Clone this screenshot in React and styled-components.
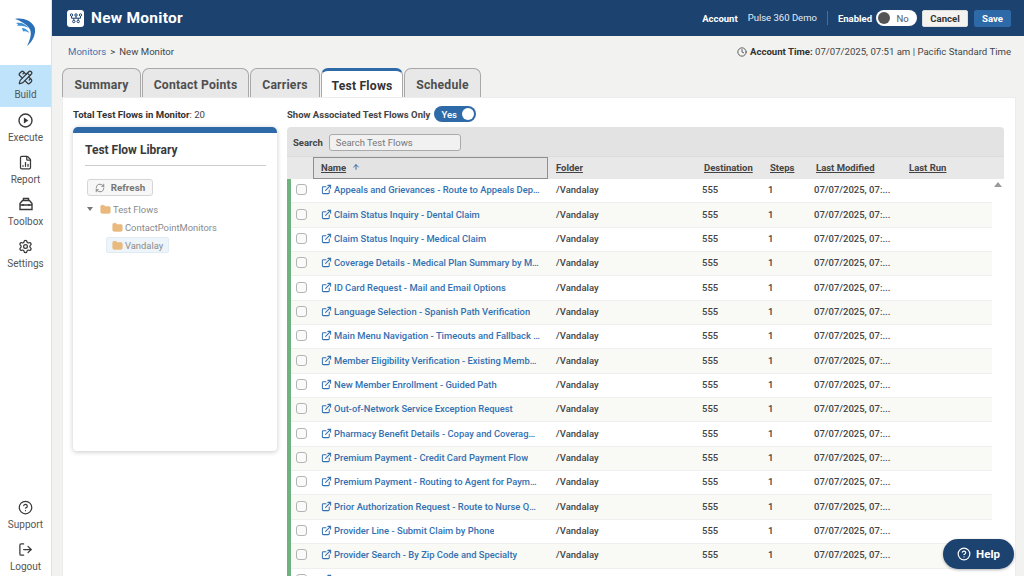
import React from 'react';
import styled, { createGlobalStyle } from 'styled-components';
import {
  PencilRuler,
  FileChartColumn,
  Settings,
  HelpCircle,
  LogOut,
  Clock,
  ExternalLink,
  RefreshCw,
  Folder,
  ArrowUp,
} from 'lucide-react';

const flows = [
  'Appeals and Grievances - Route to Appeals Department',
  'Claim Status Inquiry - Dental Claim',
  'Claim Status Inquiry - Medical Claim',
  'Coverage Details - Medical Plan Summary by Member',
  'ID Card Request - Mail and Email Options',
  'Language Selection - Spanish Path Verification',
  'Main Menu Navigation - Timeouts and Fallback Routing',
  'Member Eligibility Verification - Existing Member Path',
  'New Member Enrollment - Guided Path',
  'Out-of-Network Service Exception Request',
  'Pharmacy Benefit Details - Copay and Coverage Lookup',
  'Premium Payment - Credit Card Payment Flow',
  'Premium Payment - Routing to Agent for Payment Help',
  'Prior Authorization Request - Route to Nurse Queue',
  'Provider Line - Submit Claim by Phone',
  'Provider Search - By Zip Code and Specialty',
  'Referral Status - Specialist Lookup',
];

const tabs = [
  { name: 'Summary', w: 79 },
  { name: 'Contact Points', w: 107 },
  { name: 'Carriers', w: 70 },
  { name: 'Test Flows', w: 82 },
  { name: 'Schedule', w: 77 },
];

const GlobalStyle = createGlobalStyle`
  * { box-sizing: border-box; }
  html, body { margin: 0; height: 100%; overflow: hidden; }
  body { font-family: Roboto, "Liberation Sans", sans-serif; color: #333; }
`;

const Page = styled.div`
  display: flex;
  width: 1024px;
  height: 576px;
  overflow: hidden;
  position: relative;
  background: #f2f2f1;
`;

const Rail = styled.nav`
  width: 52px;
  flex: none;
  display: flex;
  flex-direction: column;
  background: #fff;
  border-right: 1px solid #e2e2e2;
`;

const Logo = styled.div`
  height: 65px;
  display: flex;
  justify-content: center;
  align-items: flex-start;
  padding-top: 18px;
`;

const RailItem = styled.a`
  height: 42.25px;
  display: flex;
  flex-direction: column;
  align-items: center;
  justify-content: flex-end;
  gap: 4px;
  padding-bottom: 6px;
  font-size: 10px;
  line-height: 12px;
  color: #555;
  background: ${(p) => (p.$active ? '#bfe3fb' : 'transparent')};
  svg { color: #3a3a3a; }
`;

const RailBottom = styled.div`
  margin-top: auto;
  margin-bottom: -3px;
`;

const Main = styled.div`
  flex: 1;
  min-width: 0;
  display: flex;
  flex-direction: column;
`;

const Header = styled.header`
  height: 36px;
  flex: none;
  display: flex;
  align-items: center;
  padding: 0 13px 0 15px;
  background: #1c4270;
  color: #fff;
`;

const HeaderBadge = styled.div`
  width: 17px;
  height: 17px;
  border-radius: 3px;
  background: #fff;
  color: #1c4270;
  display: flex;
  align-items: center;
  justify-content: center;
  margin-right: 7px;
`;

const Title = styled.h1`
  margin: 0;
  font-size: 15.5px;
  font-weight: 700;
  letter-spacing: 0.25px;
`;

const HeaderRight = styled.div`
  margin-left: auto;
  display: flex;
  align-items: center;
  font-size: 9.5px;
`;

const AccountLabel = styled.span`
  font-weight: 700;
  margin-right: 10px;
`;

const AccountName = styled.span`
  color: #e6ecf3;
  padding-right: 10px;
  border-right: 1px solid #4f6d92;
  line-height: 14px;
  margin-right: 10px;
`;

const EnabledLabel = styled.span`
  font-weight: 700;
  margin-right: 4px;
`;

const Toggle = styled.div`
  width: ${(p) => p.$w}px;
  height: 16px;
  border-radius: 8px;
  display: flex;
  align-items: center;
  padding: 0 2px;
  font-size: 9.5px;
  background: ${(p) => (p.$on ? '#2f6aa8' : '#fff')};
  color: ${(p) => (p.$on ? '#fff' : '#555')};
  font-weight: ${(p) => (p.$on ? 500 : 400)};
`;

const ToggleText = styled.span`
  flex: 1;
  text-align: center;
`;

const Knob = styled.i`
  width: 12px;
  height: 12px;
  border-radius: 50%;
  background: ${(p) => (p.$on ? '#fff' : '#555')};
`;

const Cancel = styled.button`
  height: 17px;
  width: 46px;
  margin-left: 5px;
  padding: 0;
  border: 1px solid #ddd;
  border-radius: 2px;
  background: #f4f3f0;
  color: #333;
  font: 700 9.6px Roboto, sans-serif;
`;

const Save = styled(Cancel)`
  background: #2f6aa8;
  border-color: #2f6aa8;
  color: #fff;
  width: 37px;
  margin-left: 6px;
`;

const Crumbs = styled.div`
  height: 32px;
  flex: none;
  display: flex;
  align-items: center;
  justify-content: space-between;
  padding: 0 13px 1px 16px;
  font-size: 9.6px;
  color: #444;
`;

const CrumbLink = styled.a`
  color: #3f73b0;
`;

const CrumbSep = styled.span`
  margin: 0 4px;
`;

const AccountTime = styled.div`
  display: flex;
  align-items: center;
  gap: 3px;
  white-space: pre;
  b { font-weight: 700; color: #333; }
`;

const Tabs = styled.div`
  display: flex;
  flex: none;
  height: 29px;
  margin-left: 10px;
  gap: 1px;
  position: relative;
  z-index: 1;
`;

const Tab = styled.div`
  width: ${(p) => p.$w}px;
  padding-top: 3px;
  display: flex;
  align-items: center;
  justify-content: center;
  white-space: nowrap;
  font-size: 12.2px;
  font-weight: 700;
  letter-spacing: 0.2px;
  color: ${(p) => (p.$active ? '#333' : '#4f4f4f')};
  background: ${(p) => (p.$active ? '#fff' : '#e8e8e8')};
  border: 1px solid #a8a8a8;
  border-bottom: none;
  border-top: ${(p) => (p.$active ? '3px solid #2f6aa8' : '1px solid #a8a8a8')};
  border-radius: 7px 7px 0 0;
`;

const Panel = styled.div`
  flex: 1;
  min-height: 0;
  margin-left: 10px;
  margin-right: 8px;
  display: grid;
  grid-template-columns: 224px 1fr;
  background: #fff;
  border: 1px solid #ececec;
  border-bottom: none;
`;

const LeftCol = styled.section`
  padding: 11px 0 0 10px;
`;

const TotalLine = styled.div`
  font-size: 9.6px;
  line-height: 12px;
  margin-bottom: 6px;
  color: #444;
  b { font-weight: 700; color: #333; }
`;

const LibraryCard = styled.div`
  width: 204px;
  height: 324px;
  padding: 0 11px 0 12px;
  background: #fff;
  border-top: 6px solid #2f6aa8;
  border-radius: 5px 5px 4px 4px;
  box-shadow: 0 1px 5px rgba(0, 0, 0, 0.22);
`;

const LibraryTitle = styled.h2`
  margin: 0;
  padding: 9px 0 7px;
  font-size: 12px;
  font-weight: 700;
  line-height: 16px;
  color: #3a3a3a;
  border-bottom: 1px solid #ccc;
`;

const RefreshButton = styled.button`
  margin: 13px 0 0 2px;
  width: 66px;
  height: 17px;
  display: flex;
  align-items: center;
  justify-content: center;
  gap: 6px;
  padding: 0;
  border: 1px solid #d6d6d6;
  border-radius: 3px;
  background: #f7f7f7;
  color: #777;
  font: 700 9.8px Roboto, sans-serif;
`;

const TreeRow = styled.div`
  display: flex;
  align-items: center;
  gap: 2px;
  width: fit-content;
  height: 16px;
  margin-top: ${(p) => p.$top}px;
  margin-left: ${(p) => p.$indent}px;
  padding: 0 ${(p) => (p.$selected ? 5 : 0)}px 0 ${(p) => (p.$selected ? 5 : 0)}px;
  font-size: 9.4px;
  color: #8a8a8a;
  background: ${(p) => (p.$selected ? '#edf5fb' : 'transparent')};
  border: ${(p) => (p.$selected ? '1px solid #dfecf6' : 'none')};
  border-radius: 2px;
  svg { color: #e9b97d; fill: #e9b97d; }
`;

const Caret = styled.span`
  width: 0;
  height: 0;
  margin-right: 5px;
  border: 3px solid transparent;
  border-top: 4px solid #777;
  border-bottom: none;
`;

const RightCol = styled.section`
  min-width: 0;
  padding: 8px 0 0 0;
  margin-right: 11px;
  display: flex;
  flex-direction: column;
`;

const ShowLine = styled.div`
  display: flex;
  align-items: center;
  gap: 4px;
  height: 16px;
  margin-bottom: 5px;
  font-size: 9.5px;
  font-weight: 700;
  color: #444;
`;

const SearchBar = styled.div`
  height: 29px;
  display: flex;
  align-items: center;
  gap: 6px;
  padding: 1px 0 0 6px;
  background: #e3e3e3;
  border-radius: 4px 4px 0 0;
  font-size: 9.5px;
  font-weight: 700;
  color: #444;
`;

const SearchInput = styled.div`
  width: 132px;
  height: 17px;
  padding-left: 6px;
  line-height: 15px;
  border: 1px solid #aaa;
  border-radius: 3px;
  background: #f1f1f1;
  font-weight: 400;
  color: #777;
`;

const HeadRow = styled.div`
  height: 23px;
  display: grid;
  grid-template-columns: 26px 235px 8px 148px 66px 46px 93px 1fr;
  grid-template-rows: 20px;
  align-items: center;
  background: #e8e8e8;
  border-top: 1px solid #dcdcdc;
  font-size: 9.5px;
  font-weight: 700;
  color: #444;
  span { text-decoration: underline; }
`;

const NameHead = styled.div`
  grid-column: 2;
  align-self: start;
  height: 22px;
  display: flex;
  align-items: center;
  gap: 6px;
  padding: 0 0 2px 7px;
  border: 1px solid #8f8f8f;
  background: #e3e3e3;
  svg { color: #2f6aa8; }
`;

const Scroller = styled.div`
  flex: 1;
  min-height: 0;
  overflow: hidden;
  position: relative;
  border-left: 4px solid #6fb27f;
  padding-right: 12px;
`;

const ScrollArrow = styled.i`
  position: absolute;
  top: 3px;
  right: 2px;
  width: 0;
  height: 0;
  border: 4px solid transparent;
  border-top: none;
  border-bottom: 5px solid #999;
`;

const Row = styled.div`
  height: 24.35px;
  display: grid;
  grid-template-columns: 22px 235px 8px 146px 66px 46px 93px 1fr;
  align-items: center;
  padding-bottom: 2px;
  font-size: 9.5px;
  font-weight: 500;
  color: #444;
  background: ${(p) => (p.$odd ? '#f9f9f5' : '#fff')};
  border-bottom: 1px solid #efefef;
`;

const Check = styled.i`
  width: 11px;
  height: 11px;
  margin-left: 5px;
  display: block;
  border: 1px solid #b4b4b4;
  border-radius: 3px;
  background: #fafafa;
`;

const NameCell = styled.a`
  grid-column: 2;
  display: flex;
  align-items: center;
  gap: 2px;
  padding: 0 8px 0 8px;
  min-width: 0;
  font-size: 9.4px;
  color: #3370b2;
  svg { flex: none; }
`;

const NameText = styled.span`
  overflow: hidden;
  white-space: nowrap;
  text-overflow: ellipsis;
`;

const FolderCell = styled.div`
  grid-column: 4;
`;

const HelpButton = styled.button`
  position: absolute;
  right: 10px;
  bottom: 7px;
  width: 71px;
  height: 30px;
  display: flex;
  align-items: center;
  justify-content: center;
  gap: 5px;
  padding: 0;
  border: none;
  border-radius: 15px;
  background: #1c4270;
  color: #fff;
  font: 700 11.5px Roboto, sans-serif;
  box-shadow: 0 1px 3px rgba(0, 0, 0, 0.3);
`;

const LogoMark = () => (
  <svg width="22" height="28" viewBox="0 0 22 28" fill="#2a6fb8">
    <path d="M0 1 C7 -0.5 16 2 19.5 9 C21.5 15 18 23 12 28 C15 22 17 16 15 11.5 C12.5 6.5 6 3 0 1 Z" />
    <path d="M1 5 C6 4 11 6 13.5 10 C10 8 6 7.5 2 8 C3.5 7 3 6 1 5 Z" fill="#3f93d6" />
    <path d="M7 10 C10 10 13 12 14.5 15 C12 13.5 10 13 8 13.5 Z" fill="#3f93d6" />
  </svg>
);

const FlowsIcon = () => (
  <svg width="14" height="14" viewBox="0 0 14 14" fill="none" stroke="currentColor" strokeWidth="1">
    <circle cx="2.5" cy="4" r="1.2" />
    <circle cx="7" cy="4" r="1.2" />
    <circle cx="11.5" cy="4" r="1.2" />
    <circle cx="4.8" cy="10.5" r="1.2" />
    <circle cx="9.2" cy="10.5" r="1.2" />
    <path d="M2.5 5.2v2h9v-2M7 5.2v2M4.8 7.2v2.1M9.2 7.2v2.1" />
  </svg>
);

const PlayIcon = () => (
  <svg width="15" height="15" viewBox="0 0 15 15" fill="none" stroke="currentColor" strokeWidth="1.4">
    <circle cx="7.5" cy="7.5" r="6.5" />
    <path d="M5.9 4.6 10.4 7.5 5.9 10.4z" fill="currentColor" stroke="none" />
  </svg>
);

const ToolboxIcon = () => (
  <svg width="16" height="16" viewBox="0 0 16 16" fill="none" stroke="currentColor" strokeWidth="1.4">
    <path d="M2 7.5 4.5 4.5h7L14 7.5v6H2z" />
    <path d="M5.5 4.5V2.5h5v2M2 9h12" />
    <path d="M5 8v2M11 8v2" />
  </svg>
);

const railTop = [
  { label: 'Build', Icon: PencilRuler, active: true },
  { label: 'Execute', Icon: PlayIcon },
  { label: 'Report', Icon: FileChartColumn },
  { label: 'Toolbox', Icon: ToolboxIcon },
  { label: 'Settings', Icon: Settings },
];

const railBottom = [
  { label: 'Support', Icon: HelpCircle },
  { label: 'Logout', Icon: LogOut },
];

const App = () => (
  <Page>
    <GlobalStyle />
    <Rail>
      <Logo>
        <LogoMark />
      </Logo>
      {railTop.map(({ label, Icon, active }) => (
        <RailItem key={label} $active={active}>
          <Icon size={15} />
          {label}
        </RailItem>
      ))}
      <RailBottom>
        {railBottom.map(({ label, Icon }) => (
          <RailItem key={label}>
            <Icon size={15} />
            {label}
          </RailItem>
        ))}
      </RailBottom>
    </Rail>
    <Main>
      <Header>
        <HeaderBadge>
          <FlowsIcon />
        </HeaderBadge>
        <Title>New Monitor</Title>
        <HeaderRight>
          <AccountLabel>Account</AccountLabel>
          <AccountName>Pulse 360 Demo</AccountName>
          <EnabledLabel>Enabled</EnabledLabel>
          <Toggle $w={41}>
            <Knob />
            <ToggleText>No</ToggleText>
          </Toggle>
          <Cancel>Cancel</Cancel>
          <Save>Save</Save>
        </HeaderRight>
      </Header>
      <Crumbs>
        <div>
          <CrumbLink>Monitors</CrumbLink>
          <CrumbSep>&gt;</CrumbSep>
          New Monitor
        </div>
        <AccountTime>
          <Clock size={10} />
          <span>
            <b>Account Time:</b> 07/07/2025, 07:51 am | Pacific Standard Time
          </span>
        </AccountTime>
      </Crumbs>
      <Tabs>
        {tabs.map((t) => (
          <Tab key={t.name} $active={t.name === 'Test Flows'} $w={t.w}>
            {t.name}
          </Tab>
        ))}
      </Tabs>
      <Panel>
        <LeftCol>
          <TotalLine>
            <b>Total Test Flows in Monitor</b>: 20
          </TotalLine>
          <LibraryCard>
            <LibraryTitle>Test Flow Library</LibraryTitle>
            <RefreshButton>
              <RefreshCw size={10} />
              Refresh
            </RefreshButton>
            <TreeRow $top={5} $indent={2}>
              <Caret />
              <Folder size={11} />
              Test Flows
            </TreeRow>
            <TreeRow $top={2} $indent={27}>
              <Folder size={11} />
              ContactPointMonitors
            </TreeRow>
            <TreeRow $top={2} $indent={21} $selected>
              <Folder size={11} />
              Vandalay
            </TreeRow>
          </LibraryCard>
        </LeftCol>
        <RightCol>
          <ShowLine>
            Show Associated Test Flows Only
            <Toggle $w={42} $on>
              <ToggleText>Yes</ToggleText>
              <Knob $on />
            </Toggle>
          </ShowLine>
          <SearchBar>
            Search
            <SearchInput>Search Test Flows</SearchInput>
          </SearchBar>
          <HeadRow>
            <NameHead>
              <span>Name</span>
              <ArrowUp size={8} strokeWidth={3} />
            </NameHead>
            <FolderCell>
              <span>Folder</span>
            </FolderCell>
            <div>
              <span>Destination</span>
            </div>
            <div>
              <span>Steps</span>
            </div>
            <div>
              <span>Last Modified</span>
            </div>
            <div>
              <span>Last Run</span>
            </div>
          </HeadRow>
          <Scroller>
            <ScrollArrow />
            {flows.map((name, i) => (
              <Row key={name} $odd={i % 2 === 1}>
                <Check />
                <NameCell>
                  <ExternalLink size={11} strokeWidth={2.2} />
                  <NameText>{name}</NameText>
                </NameCell>
                <FolderCell>/Vandalay</FolderCell>
                <div>555</div>
                <div>1</div>
                <div>07/07/2025, 07:...</div>
                <div />
              </Row>
            ))}
          </Scroller>
        </RightCol>
      </Panel>
    </Main>
    <HelpButton>
      <HelpCircle size={14} />
      Help
    </HelpButton>
  </Page>
);

export default App;
